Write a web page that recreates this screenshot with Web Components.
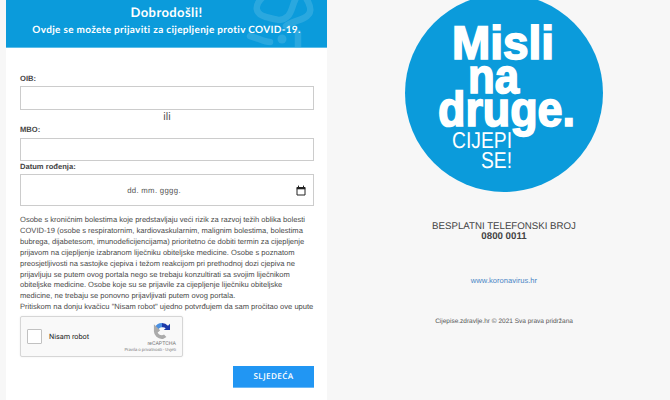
<!DOCTYPE html>
<html lang="hr"><head><meta charset="utf-8"><title>Cijepise</title>
<style>
html,body{margin:0;height:100%;overflow:hidden;background:#f7f7f7;font-family:"Liberation Sans",Arial,sans-serif;text-rendering:geometricPrecision}
app-shell{height:400px}
</style></head><body>
<app-shell>
  <reg-card slot="left">
    <welcome-banner></welcome-banner>
    <text-field label="OIB:" first></text-field>
    <or-sep>ili</or-sep>
    <text-field label="MBO:" short></text-field>
    <date-field label="Datum rođenja:" placeholder="dd. mm. gggg."></date-field>
    <info-note>
      Osobe s kroničnim bolestima koje predstavljaju veći rizik za razvoj težih oblika bolesti<br>
      COVID-19 (osobe s respiratornim, kardiovaskularnim, malignim bolestima, bolestima<br>
      bubrega, dijabetesom, imunodeficijencijama) prioritetno će dobiti termin za cijepljenje<br>
      prijavom na cijepljenje izabranom liječniku obiteljske medicine. Osobe s poznatom<br>
      preosjetljivosti na sastojke cjepiva i težom reakcijom pri prethodnoj dozi cjepiva ne<br>
      prijavljuju se putem ovog portala nego se trebaju konzultirati sa svojim liječnikom<br>
      obiteljske medicine. Osobe koje su se prijavile za cijepljenje liječniku obiteljske<br>
      medicine, ne trebaju se ponovno prijavljivati putem ovog portala.<br>
      Pritiskom na donju kvačicu "Nisam robot" ujedno potvrđujem da sam pročitao ove upute
    </info-note>
    <captcha-box></captcha-box>
    <next-button>SLJEDEĆA</next-button>
  </reg-card>
  <side-panel slot="right"></side-panel>
</app-shell>
<script>
function def(name, css, html){
  customElements.define(name, class extends HTMLElement{
    connectedCallback(){
      if(this.shadowRoot) return;
      const r=this.attachShadow({mode:'open'});
      const h=typeof html==='function'?html(this):html;
      r.innerHTML='<style>'+css+'</style>'+h;
    }
  });
}
def('app-shell',`:host{display:flex;height:400px}
 .l{display:block;width:321px;margin-left:6px;flex:none}
 .r{display:block;flex:1;min-width:0}`,
 `<div class="l"><slot name="left"></slot></div><div class="r"><slot name="right"></slot></div>`);
def('reg-card',`:host{display:block;height:400px;background:#fff;overflow:hidden}`,`<slot></slot>`);
def('welcome-banner',`:host{display:block;position:relative;height:48px;background:#0b9bdb;color:#fff;text-align:center;overflow:hidden;font-family:Lato,"Open Sans",sans-serif;font-weight:700;border-bottom:1px solid #5cbde8;box-sizing:border-box}
 h1{margin:0;padding-top:2px;font-size:13px;line-height:20px;font-weight:700;letter-spacing:.4px;position:relative}
 p{margin:0;font-size:10px;line-height:15px;padding-top:1px;letter-spacing:.32px;position:relative}
 svg{position:absolute;left:214px;top:0}`,
 `<svg width="107" height="48" viewBox="0 0 107 48" fill="none" stroke="#fff" stroke-opacity=".13" stroke-width="6.5" stroke-linecap="round"><path d="M42 -2C34 6 35 14 46 17C56 20 62 22 68 16C72 12 72 6 76 -2"/><path d="M86 -2C92 8 92 14 84 18C78 21 70 22 66 26"/><path d="M30 36C38 38 44 42 50 42"/><circle cx="62" cy="39" r="4.5" fill="#fff" fill-opacity=".13" stroke="none"/><path d="M78 33V50"/></svg>
 <h1>Dobrodošli!</h1><p>Ovdje se možete prijaviti za cijepljenje protiv COVID-19.</p>`);
const fieldCss=`:host{display:block;padding:0 13px 0 14px}
 label{display:block;font:700 7.6px/12px "Liberation Sans",sans-serif;color:#444}
 .box{box-sizing:border-box;border:1px solid #ccc;background:#fff;width:294px}`;
def('text-field',fieldCss+`
 :host([first]){padding-top:25px}
 .box{height:24px;margin-top:2px}
 :host([first]) .box{margin-top:1px}
 :host([short]) .box{height:23px}`,
 el=>`<label>${el.getAttribute('label')}</label><div class="box"></div>`);
def('or-sep',`:host{display:block;text-align:center;font:11px/14px "Liberation Sans",sans-serif;color:#555;height:14px;padding-left:1px}`,`<slot></slot>`);
def('date-field',fieldCss+`
 .box{height:32px;margin-top:1px;display:flex;align-items:center;padding:0 7px 0 10px;font:7.8px "Liberation Sans",sans-serif;color:#555;letter-spacing:.3px}
 span{flex:1;text-align:center;padding-right:19px}svg{flex:none;display:block}`,
 el=>`<label>${el.getAttribute('label')}</label><div class="box"><span>${el.getAttribute('placeholder')}</span><svg width="10" height="11" viewBox="0 0 10 11"><path d="M1 2.5H9V10H1Z" fill="none" stroke="#222" stroke-width="1"/><path d="M.8 2H9.2V4.3H.8Z" fill="#222"/><path d="M2.5 .6V2.5M7.5 .6V2.5" stroke="#222" stroke-width="1"/></svg></div>`);
def('info-note',`:host{display:block;margin:9px 0 0 14px;font:7.57px/10.9px "Liberation Sans",sans-serif;color:#4a4a4a;white-space:nowrap}`,`<slot></slot>`);
def('captcha-box',`:host{display:flex;box-sizing:border-box;width:163px;height:41px;margin:3px 0 0 14px;background:#f9f9f9;border:1px solid #d6d6d6;border-radius:2px;box-shadow:0 0 2px rgba(0,0,0,.08);font-family:Roboto,sans-serif;color:#222;align-items:center}
 .c{width:15px;height:15px;box-sizing:border-box;border:1px solid #c1c1c1;background:#fff;border-radius:1px;margin-left:6px;flex:none}
 .t{font-size:7.3px;margin-left:7px;flex:1}
 .b{width:58px;flex:none;margin-right:6px;text-align:right;color:#777;align-self:flex-start;padding-top:5px}
 svg{display:block;margin:0 5px 0 auto}
 .n{font-size:5.3px;line-height:7px;margin-top:1px}
 .p{font-size:4.3px;line-height:6px;white-space:nowrap}`,
 `<div class="c"></div><div class="t">Nisam robot</div><div class="b"><svg width="18" height="18" viewBox="0 0 18 18"><path d="M9 1A8 8 0 0 0 1.6 6L4.8 8.5A4.6 4.6 0 0 1 9 5.2Z" fill="#4a90e2"/><path d="M9 1A8 8 0 0 1 15 3.8L17 1.8V8H10.8L12.7 6.2A4.6 4.6 0 0 0 9 5.2Z" fill="#1c3aa9"/><path d="M.9 9.5V2.2L3 4.2 7.2 8.3 5.4 10H4.6A4.6 4.6 0 0 0 9 13.2L11.2 15.4 10 17H9A8 8 0 0 1 .9 9.5Z" fill="#ababab"/><path d="M9 13.2A4.6 4.6 0 0 0 11 12.6L13.4 15A8 8 0 0 1 9 17Z" fill="#ababab"/></svg><div class="n">reCAPTCHA</div><div class="p">Pravila o privatnosti - Uvjeti</div></div>`);
def('next-button',`:host{display:flex;justify-content:flex-end;margin-top:9px;padding-right:13px}
 div{box-sizing:border-box;width:81px;height:22px;background:#2196f3;border-bottom:1px solid #6ab8f7;color:#fff;font:600 8.2px/21px "Open Sans",sans-serif;letter-spacing:.35px;text-align:center}`,`<div><slot></slot></div>`);
def('side-panel',`:host{display:flex;flex-direction:column;align-items:center;height:400px;color:#444;font-family:"Liberation Sans",sans-serif;padding-left:11px;overflow:hidden}
 svg{display:block;flex:none;margin-top:-6px;overflow:visible}
 .h{margin-top:30px;font-size:9.7px;line-height:10px;text-align:center;white-space:nowrap}
 .h b{display:block}
 a{margin-top:33px;font-size:7.6px;line-height:11px;color:#4a86c5;text-decoration:none}
 .f{margin-top:31px;font-size:6.5px;line-height:10px;color:#555}`,
 `<svg width="198" height="198" viewBox="0 0 198 198"><circle cx="99" cy="99" r="99" fill="#0b9bdb"/>
 <g fill="#fff" stroke="#fff" font-family="Liberation Sans" font-weight="700">
 <text x="47" y="65" font-size="47" stroke-width="1.7" textLength="102" lengthAdjust="spacingAndGlyphs">Misli</text>
 <text x="63" y="99" font-size="49" stroke-width="1.7" textLength="51" lengthAdjust="spacingAndGlyphs">na</text>
 <text x="33" y="132" font-size="49" stroke-width="1.7" textLength="137" lengthAdjust="spacingAndGlyphs">druge.</text></g>
 <g fill="#fff" font-family="Liberation Sans" font-size="23">
 <text x="47" y="154" textLength="60" lengthAdjust="spacingAndGlyphs">CIJEPI</text>
 <text x="76" y="174" textLength="31" lengthAdjust="spacingAndGlyphs">SE!</text></g></svg>
 <div class="h">BESPLATNI TELEFONSKI BROJ<b>0800 0011</b></div>
 <a href="#">www.koronavirus.hr</a>
 <div class="f">Cijepise.zdravlje.hr © 2021 Sva prava pridržana</div>`);
</script>
</body></html>
